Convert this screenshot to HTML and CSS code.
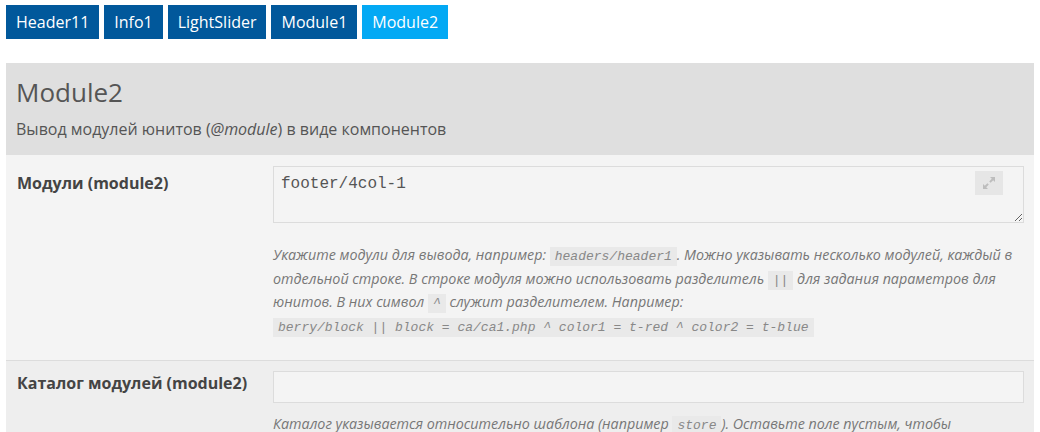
FILE: index.html
```html
<!DOCTYPE html>
<html lang="ru">
<head>
<meta charset="utf-8">
<title>Module2</title>
<link rel="stylesheet" href="styles.css">
</head>
<body>
<nav class="tabs">
  <a class="tab">Header11</a>
  <a class="tab">Info1</a>
  <a class="tab">LightSlider</a>
  <a class="tab">Module1</a>
  <a class="tab tab-active">Module2</a>
</nav>
<section class="panel">
  <header class="panel-head">
    <h1 class="panel-title">Module2</h1>
    <p class="panel-sub">Вывод модулей юнитов (<em>@module</em>) в виде компонентов</p>
  </header>
  <div class="row row-odd">
    <label class="row-label">Модули (module2)</label>
    <div class="row-field">
      <div class="ta-wrap">
        <textarea class="ta">footer/4col-1</textarea>
        <span class="expand"><svg width="14" height="14" viewBox="0 0 14 14"><path d="M8 1h5v5l-1.8-1.8-2.6 2.6-1.4-1.4 2.6-2.6z M6 13H1V8l1.8 1.8 2.6-2.6 1.4 1.4-2.6 2.6z" fill="#bdbdbd"/></svg></span>
      </div>
      <p class="help help-ta">Укажите модули для вывода, например: <code>headers/header1</code>. Можно указывать несколько модулей, каждый в отдельной строке. В строке модуля можно использовать разделитель <code>||</code> для задания параметров для юнитов. В них символ <code>^</code> служит разделителем. Например:<br><code>berry/block || block = ca/ca1.php ^ color1 = t-red ^ color2 = t-blue</code></p>
    </div>
  </div>
  <div class="row row-even">
    <label class="row-label">Каталог модулей (module2)</label>
    <div class="row-field">
      <input class="inp" type="text">
      <p class="help help-inp">Каталог указывается относительно шаблона (например <code>store</code>). Оставьте поле пустым, чтобы использовать каталог по умолчанию.</p>
    </div>
  </div>
</section>
</body>
</html>
```

FILE: styles.css
```css
html, body {
  margin: 0;
  padding: 0;
  background: #fff;
}
body {
  font-family: "Open Sans", "Noto Sans", sans-serif;
  color: #555;
  padding: 5px 6px 0 6px;
}
.tabs {
  display: flex;
  gap: 5px;
  height: 34px;
}
.tab {
  display: flex;
  align-items: center;
  padding: 0 10px;
  background: #01589b;
  color: #fff;
  font-size: 16px;
  text-decoration: none;
}
.tab-active {
  background: #03a9f4;
}
.panel {
  margin-top: 24px;
  width: 1028px;
}
.panel-head {
  background: #dfdfdf;
  padding: 12px 10px 14px 10px;
  height: 66px;
}
.panel-title {
  margin: 0;
  font-size: 26px;
  font-weight: 400;
  line-height: 34px;
  color: #555;
}
.panel-sub {
  margin: 9px 0 0 0;
  font-size: 16px;
  line-height: 22px;
  color: #555;
}
.row {
  display: flex;
  padding: 11px 10px 0 11px;
}
.row-odd {
  background: #f4f4f4;
  height: 194px;
  border-bottom: 1px solid #dcdcdc;
}
.row-even {
  background: #eeeeee;
  height: 80px;
  padding-top: 10px;
}
.row-label {
  width: 256px;
  flex: none;
  font-size: 16px;
  font-weight: 700;
  color: #444;
  padding-top: 6px;
  line-height: 22px;
}
.row-even .row-label {
  padding-top: 1px;
}
.row-field {
  flex: 1;
  min-width: 0;
}
.ta-wrap {
  position: relative;
  height: 57px;
}
.ta {
  box-sizing: border-box;
  display: block;
  width: 751px;
  height: 57px;
  margin: 0;
  border: 1px solid #dcdcdc;
  background: #f4f4f4;
  padding: 7px 7px;
  font-family: "Liberation Mono", "DejaVu Sans Mono", monospace;
  font-size: 16px;
  line-height: 20px;
  color: #555;
  resize: vertical;
}
.expand {
  position: absolute;
  top: 5px;
  right: 21px;
  width: 28px;
  height: 24px;
  background: #e6e6e6;
  display: flex;
  align-items: center;
  justify-content: center;
}
.inp {
  box-sizing: border-box;
  display: block;
  width: 751px;
  height: 32px;
  margin: 0;
  border: 1px solid #dcdcdc;
  background: #f4f4f4;
}
.help {
  margin: 0;
  font-size: 14.3px;
  font-style: italic;
  line-height: 23.6px;
  color: #777;
  width: 751px;
}
.help-ta {
  margin-top: 20px;
}
.help-inp {
  margin-top: 9px;
}
.help code {
  font-family: "Liberation Mono", "DejaVu Sans Mono", monospace;
  font-size: 13px;
  line-height: 15px;
  background: #e9e9e9;
  color: #888;
  padding: 2px 5px;
}
```
